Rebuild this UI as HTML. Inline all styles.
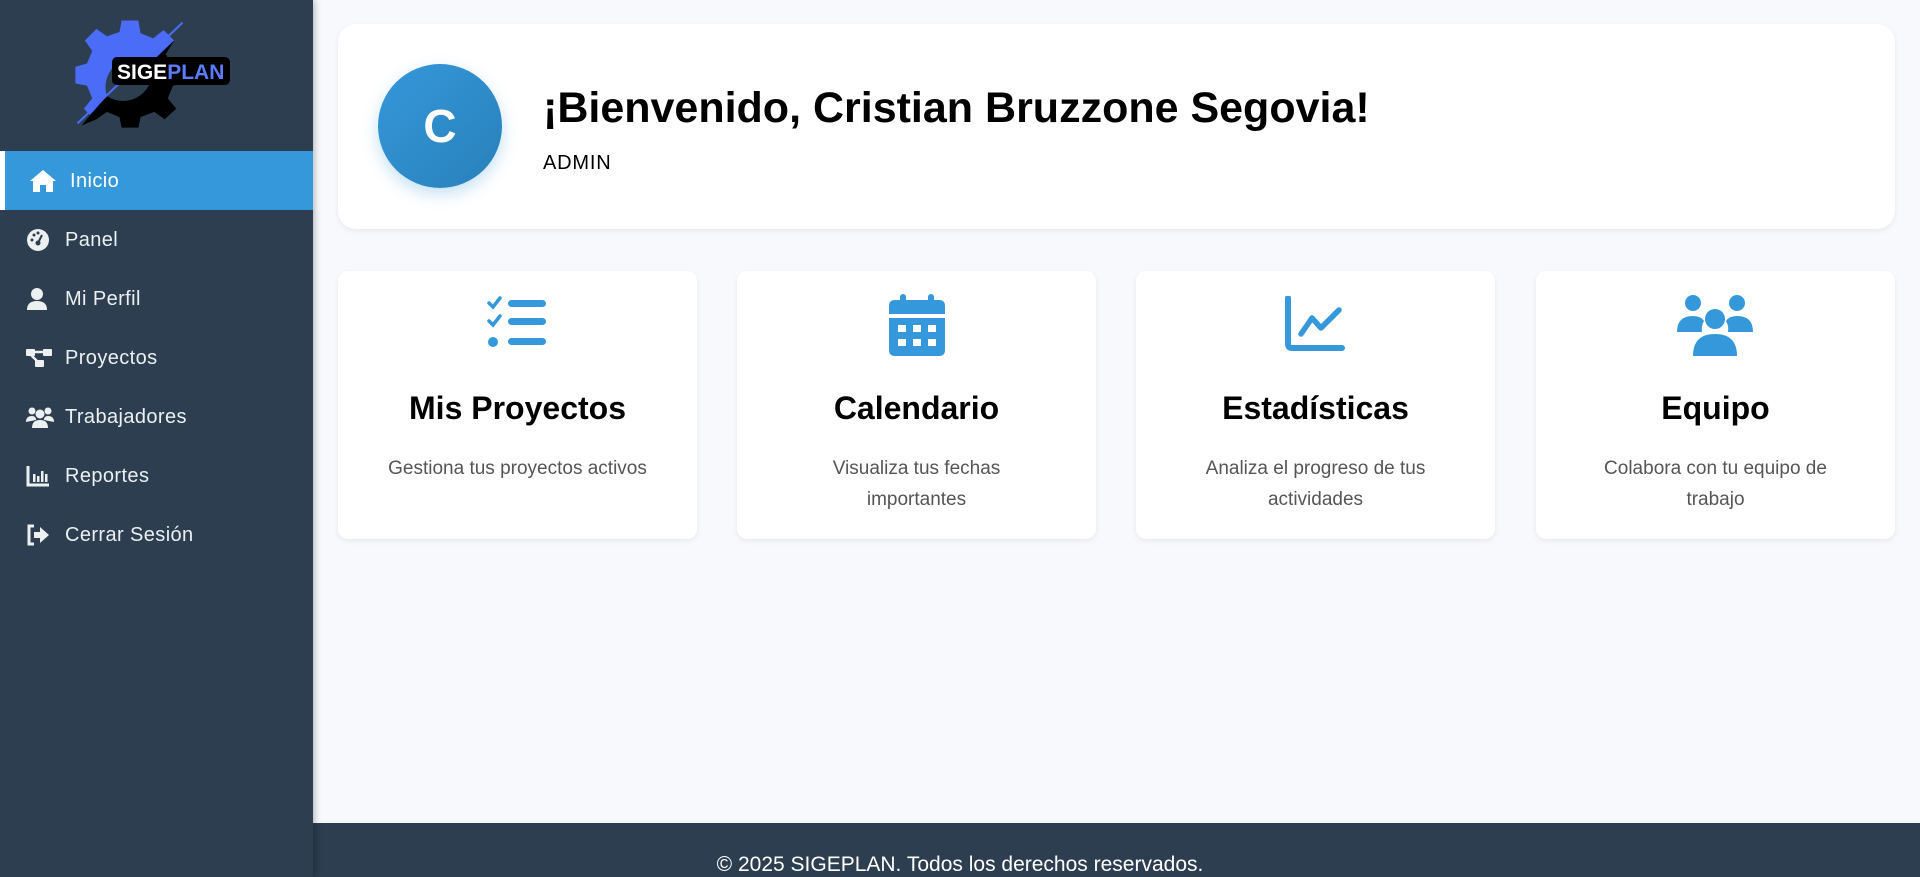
<!DOCTYPE html>
<html><head><meta charset="utf-8"><style>
*{box-sizing:border-box;margin:0;padding:0}
body{width:1920px;height:877px;overflow:hidden;background:#f8f9fc;font-family:"Liberation Sans",sans-serif;position:relative}
.side{position:absolute;left:0;top:0;width:313px;height:877px;background:#2c3e50;box-shadow:2px 0 6px rgba(0,0,0,.25);z-index:2}
.item{position:absolute;left:0;width:313px;height:59px;display:flex;align-items:center;color:#ecf0f1;font-size:20px;letter-spacing:.4px}
.item svg{position:absolute;left:26px;top:50%;transform:translateY(-50%)}
.item span{position:absolute;left:65px;top:19px}
.active{background:#3498db;color:#fff;border-left:5px solid #fff}
.active svg{left:24px}.active span{left:65px}
.card{position:absolute;background:#fff;border-radius:10px;box-shadow:0 2px 6px rgba(0,0,0,.07)}
.feat{top:271px;width:359px;height:268px;text-align:center}
.feat h3{position:absolute;top:390px;width:100%;font-size:32px;font-weight:bold;color:#000}
.feat p{position:absolute;top:453px;left:45px;right:45px;font-size:19px;line-height:31px;color:#555}
.foot{position:absolute;left:313px;top:823px;width:1607px;height:54px;background:#2c3e50}
</style></head><body>
<div class="side">
<svg width="313" height="140" style="position:absolute;left:0;top:0" viewBox="0 0 313 140">
<g transform="translate(130,73) scale(1.05)">
<path d="M-8,-50 L8,-50 L10,-38 L22,-33 L32,-41 L42,-31 L20,-10 A28,28 0 0 0 -22,22 L-38,40 L-44,34 L-36,24 L-41,12 L-52,10 L-52,-6 L-41,-9 L-36,-21 L-43,-31 L-32,-42 L-22,-35 L-10,-39 Z" fill="#4a6cf7"/>
<path d="M42,-31 L34,-18 L40,-8 L52,-6 L52,10 L41,12 L36,24 L44,34 L33,44 L23,37 L10,42 L8,52 L-8,52 L-10,42 L-22,37 L-32,44 L-46,50 L-38,40 L-22,22 A28,28 0 0 0 20,-10 Z" fill="#000"/>
<line x1="-50" y1="48" x2="50" y2="-48" stroke="#4a6cf7" stroke-width="2"/>
</g>
<rect x="112" y="57" width="118" height="28" rx="5" fill="#000"/>
<text x="117" y="79" font-family="Liberation Sans" font-weight="bold" font-size="21" fill="#fff">SIGE<tspan fill="#5b7cff">PLAN</tspan></text>
</svg>
<div class="item active" style="top:151px"><svg width="28" height="24" viewBox="0 0 28 24"><path d="M14 1 L27 12 L24 12 L24 23 L17 23 L17 16 L11 16 L11 23 L4 23 L4 12 L1 12 Z" fill="#fff"/></svg><span>Inicio</span></div>
<div class="item" style="top:210px"><svg width="24" height="24" viewBox="0 0 24 24"><circle cx="12" cy="12" r="11" fill="#ecf0f1"/><circle cx="12" cy="15" r="2.5" fill="#2c3e50"/><path d="M12 15 L16 7" stroke="#2c3e50" stroke-width="2"/><circle cx="6" cy="12" r="1.5" fill="#2c3e50"/><circle cx="8" cy="7" r="1.5" fill="#2c3e50"/><circle cx="12" cy="5" r="1.5" fill="#2c3e50"/></svg><span>Panel</span></div>
<div class="item" style="top:269px"><svg width="22" height="24" viewBox="0 0 22 24"><circle cx="11" cy="7" r="6" fill="#ecf0f1"/><path d="M1 23 Q1 14 11 14 Q21 14 21 23 Z" fill="#ecf0f1"/></svg><span>Mi Perfil</span></div>
<div class="item" style="top:328px"><svg width="26" height="22" viewBox="0 0 26 22"><rect x="0" y="2" width="9" height="7" rx="1" fill="#ecf0f1"/><rect x="17" y="2" width="9" height="7" rx="1" fill="#ecf0f1"/><rect x="9" y="13" width="9" height="7" rx="1" fill="#ecf0f1"/><path d="M8 5 H18 M5 8 L12 15" stroke="#ecf0f1" stroke-width="2.5"/></svg><span>Proyectos</span></div>
<div class="item" style="top:387px"><svg width="28" height="22" viewBox="0 0 28 22"><circle cx="6" cy="5" r="3.5" fill="#ecf0f1"/><circle cx="22" cy="5" r="3.5" fill="#ecf0f1"/><circle cx="14" cy="8" r="4.5" fill="#ecf0f1"/><path d="M0 16 Q0 10 6 10 Q10 10 10 14 Z M28 16 Q28 10 22 10 Q18 10 18 14 Z M6 22 Q6 14 14 14 Q22 14 22 22 Z" fill="#ecf0f1"/></svg><span>Trabajadores</span></div>
<div class="item" style="top:446px"><svg width="24" height="22" viewBox="0 0 24 22"><path d="M2 1 V20 H23" stroke="#ecf0f1" stroke-width="3" fill="none"/><rect x="7" y="9" width="2.5" height="8" fill="#ecf0f1"/><rect x="11" y="11" width="2.5" height="6" fill="#ecf0f1"/><rect x="15" y="6" width="2.5" height="11" fill="#ecf0f1"/><rect x="19" y="9" width="2.5" height="8" fill="#ecf0f1"/></svg><span>Reportes</span></div>
<div class="item" style="top:505px"><svg width="24" height="22" viewBox="0 0 24 22"><path d="M8 2 H3 V20 H8" stroke="#ecf0f1" stroke-width="3" fill="none"/><path d="M8 8 H14 V3 L23 11 L14 19 V14 H8 Z" fill="#ecf0f1"/></svg><span>Cerrar Sesión</span></div>
</div>

<div class="card" style="left:338px;top:24px;width:1557px;height:205px;border-radius:18px">
<div style="position:absolute;left:40px;top:40px;width:124px;height:124px;border-radius:50%;background:linear-gradient(135deg,#3498db,#2980b9);box-shadow:0 6px 16px rgba(52,152,219,.3);color:#fff;font-size:46px;font-weight:bold;text-align:center;line-height:124px">C</div>
<div style="position:absolute;left:205px;top:60px;font-size:43px;font-weight:bold;color:#000">¡Bienvenido, Cristian Bruzzone Segovia!</div>
<div style="position:absolute;left:205px;top:128px;font-size:20px;color:#000;letter-spacing:.8px">ADMIN</div>
</div>

<div class="card feat" style="left:338px"></div>
<div class="card feat" style="left:737px"></div>
<div class="card feat" style="left:1136px"></div>
<div class="card feat" style="left:1536px"></div>
<div style="position:absolute;left:0;top:0">
<div style="position:absolute;left:338px;top:0;width:359px" class="feat"><svg width="62" height="54" viewBox="0 0 62 54" style="left:148px;top:296px;position:absolute"><path d="M3 7 L7 11 L14 2 M3 25 L7 29 L14 20" stroke="#3498db" stroke-width="3.5" fill="none" stroke-linecap="round"/><circle cx="7" cy="46" r="5" fill="#3498db"/><rect x="22" y="4" width="38" height="7" rx="3.5" fill="#3498db"/><rect x="22" y="22" width="38" height="7" rx="3.5" fill="#3498db"/><rect x="22" y="42" width="38" height="7" rx="3.5" fill="#3498db"/></svg><h3>Mis Proyectos</h3><p>Gestiona tus proyectos activos</p></div>
<div style="position:absolute;left:737px;top:0;width:359px" class="feat"><svg width="56" height="62" viewBox="0 0 56 62" style="left:152px;top:294px;position:absolute"><rect x="11" y="0" width="6" height="10" rx="3" fill="#3498db"/><rect x="39" y="0" width="6" height="10" rx="3" fill="#3498db"/><path d="M0 12 Q0 6 6 6 H50 Q56 6 56 12 V20 H0 Z" fill="#3498db"/><path d="M0 24 H56 V56 Q56 62 50 62 H6 Q0 62 0 56 Z" fill="#3498db"/><g fill="#fff"><rect x="9" y="31" width="8" height="7"/><rect x="24" y="31" width="8" height="7"/><rect x="39" y="31" width="8" height="7"/><rect x="9" y="45" width="8" height="7"/><rect x="24" y="45" width="8" height="7"/><rect x="39" y="45" width="8" height="7"/></g></svg><h3>Calendario</h3><p>Visualiza tus fechas importantes</p></div>
<div style="position:absolute;left:1136px;top:0;width:359px" class="feat"><svg width="62" height="56" viewBox="0 0 62 56" style="left:148px;top:296px;position:absolute"><path d="M4 2 V48 Q4 52 8 52 H58" stroke="#3498db" stroke-width="6" fill="none" stroke-linecap="round"/><path d="M17 38 L28 22 L37 32 L55 14" stroke="#3498db" stroke-width="5.5" fill="none" stroke-linecap="round" stroke-linejoin="round"/></svg><h3>Estadísticas</h3><p>Analiza el progreso de tus actividades</p></div>
<div style="position:absolute;left:1536px;top:0;width:359px" class="feat"><svg width="76" height="62" viewBox="0 0 76 62" style="left:141px;top:294px;position:absolute"><g fill="#3498db"><circle cx="16" cy="9" r="8"/><circle cx="60" cy="9" r="8"/><circle cx="38" cy="25" r="10"/><path d="M0 38 Q0 22 16 22 Q24 22 27 27 Q24 32 25 38 Z"/><path d="M76 38 Q76 22 60 22 Q52 22 49 27 Q52 32 51 38 Z"/><path d="M16 62 Q16 40 38 40 Q60 40 60 62 Z"/></g></svg><h3>Equipo</h3><p>Colabora con tu equipo de trabajo</p></div>
</div>

<div class="foot"></div>
<div style="position:absolute;left:0;width:1920px;top:853px;text-align:center;color:#fff;font-size:21px">© 2025 SIGEPLAN. Todos los derechos reservados.</div>
</body></html>
